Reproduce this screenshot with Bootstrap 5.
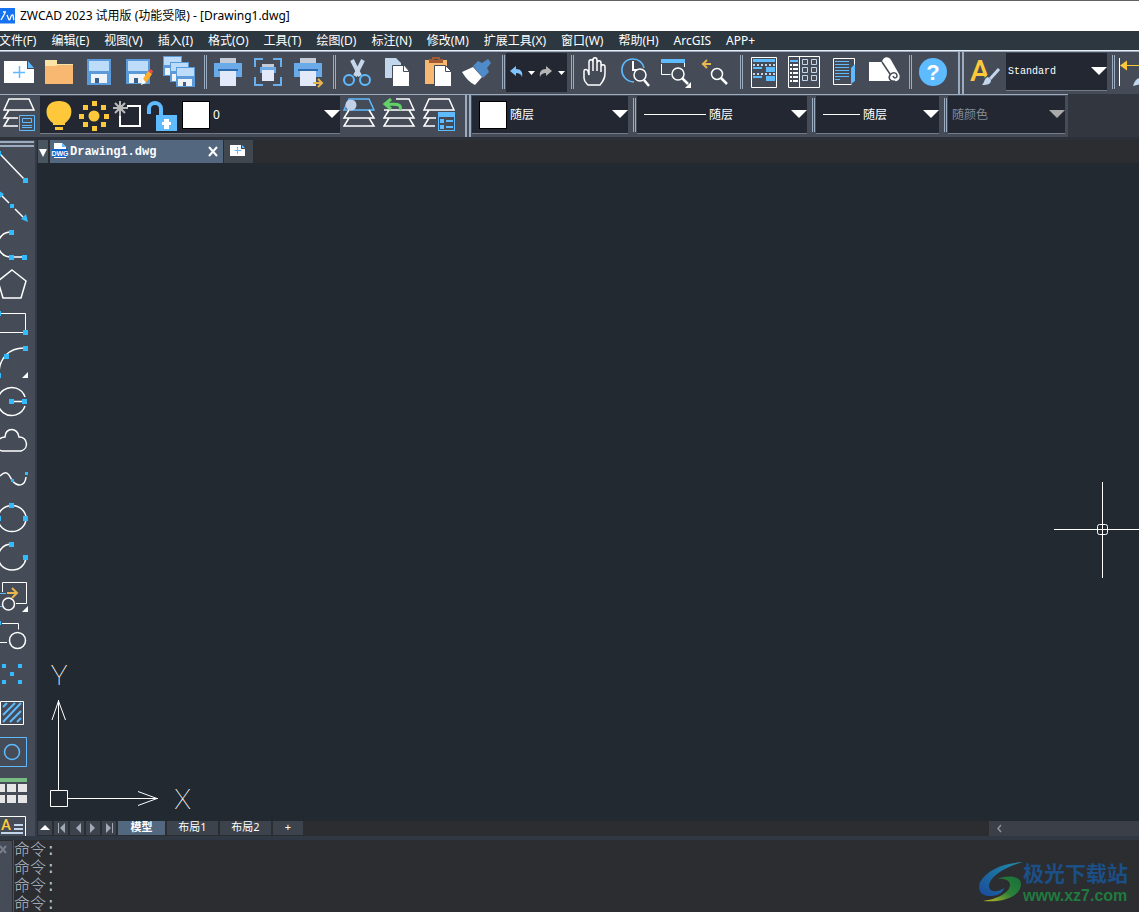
<!DOCTYPE html>
<html lang="zh-CN">
<head>
<meta charset="utf-8">
<meta name="viewport" content="width=device-width, initial-scale=1">
<title>ZWCAD 2023</title>
<link rel="stylesheet" href="https://cdn.jsdelivr.net/npm/bootstrap@5.3.0/dist/css/bootstrap.min.css">
<style>
:root{--tool:#454c58;--dark:#222732;--edge:#9babc0}
body{font-family:"Noto Sans","Noto Sans CJK SC",sans-serif;font-size:12px;line-height:16px;background:#31363f;color:#fff}
button{border:0;background:none;padding:0;color:inherit}
svg{display:block}
.titlebar{height:31px;border-top:1px solid #636363;background:#fff;color:#000}
.menubar{height:20px;background:#2d373f;border-bottom:1px solid #e6ecf2;gap:15px}
.menubar a{color:#fff;text-decoration:none;white-space:nowrap}
.strip{height:43px;background:var(--tool);border-top:1px solid var(--edge)}
.strip2{height:43px}
.strip2 .strip{width:max-content;padding-right:3px}
.tool{width:40px;height:42px;flex:none}
.first{margin-left:-1px}
.thin-sep{width:9px;flex:none;padding:3px 0 5px 5px}
.thin-sep::before{content:"";display:block;width:3px;height:100%;border:solid var(--edge);border-width:0 1px}
.wide-sep{width:12px;flex:none;padding-left:5px}
.wide-sep::before{content:"";display:block;width:6px;height:100%;border:solid var(--edge);border-width:0 2px}
.undo{width:61px;height:39px;margin-top:1px;background:var(--dark);flex:none}
.undo + .thin-sep{width:8px;padding-left:4px}
.combo{position:relative;height:38px;margin:1px 0 0 1px;background:var(--dark);border-bottom:1px solid #747b86;flex:none}
.thin-sep + .combo,.wide-sep + .combo{margin-left:0}
.combo select{appearance:none;border:0;background:none;color:#fff;flex:1;min-width:0;padding:0 0 0 3px;font:inherit;height:100%;outline:0}
.combo::after{content:"";position:absolute;right:0;top:14px;width:16px;height:8px;background:#fff;clip-path:polygon(0 0,100% 0,50% 100%);pointer-events:none}
.combo.off::after{background:#aaa}
.combo.off select{color:#858a94;opacity:1}
.layer{width:300px;padding-left:2px}.layer .tool{width:34px;height:38px}
.colour{width:156px}.ltype{width:170px}.lweight{width:123px}.pcolour{width:117px}.tstyle{width:101px}
.colour,.ltype,.lweight{padding-left:7px}
.tstyle select{font:10px "Liberation Mono",monospace;padding-left:2px}
.swatch{width:28px;height:28px;background:#fff;border:1px solid #000;flex:none}
.rule{height:1px;width:62px;background:#fff;flex:none}
.lweight .rule{width:37px}
.gap-row{height:3px;background:#2c3038}
.palette{width:37px;background:var(--tool);border-right:2px solid #323b47;flex:none}
.grip{height:8px;flex:none;padding:1px 1px 0 0}
.grip::before{content:"";display:block;height:6px;border:solid var(--edge);border-width:2px 0}
.palette button{width:35px;height:39px;flex:none;display:block}
.doctabs{height:23px;background:#2b2d31;gap:2px;padding-left:1px;flex:none}
.doctab{width:173px;background:#53677f;font:bold 12px "Liberation Mono",monospace}
.plus{width:29px;margin-left:-1px;background:#40474f}
.drop{width:10px;background:#4a565f}
.canvas{background:#222930;min-height:0}
.ucs{left:13px;bottom:0}
.cross{right:0;top:319px}
.sheets{height:15px;background:#2b2d31;gap:2px;padding-left:1px;flex:none}
.sheets button{background:#3d434c;height:14px;line-height:12px;font-size:11px;display:flex;justify-content:center;align-items:flex-start}
.sheets .nav-b{width:14px}.sheets .tab-b{width:51px}.sheets .add-b{width:30px}
.sheets .tab-b.on{width:47px;background:#53677f;font-weight:bold}
.scroll{width:150px;background:#3b4048}
.split{height:4px;background:#303844}
.cmd{background:#2b2d31;color:#b9bfca;height:72px}
.cmdbar{width:12px;background:var(--tool);margin-top:1px}
.cmdtext{border-left:1px solid #50555c;margin-left:1px;padding-top:2px;font:300 16px/18px "Liberation Mono","Noto Sans CJK SC",sans-serif}
.brand{right:11px;top:20px}
.brand-cn{font:bold 21px/24px "Noto Sans CJK SC",sans-serif;color:#1b4f86}
.brand-url{font:bold 16px/24px "Liberation Sans",sans-serif;color:#217a3e}
.w{fill:none;stroke:#fff;stroke-width:1.5}
.b{fill:none;stroke:#5ebbff;stroke-width:1.5}
.s1{stroke-width:1}.s2{stroke-width:2}.s3{stroke-width:2.5}
.d{fill:#33bbff}
</style>
</head>
<body class="vh-100 overflow-hidden d-flex flex-column">
<header class="flex-shrink-0">
  <div class="titlebar d-flex align-items-center">
    <svg width="16" height="16" viewBox="0 0 16 16" class="me-1"><path fill="#1672ee" d="M0 0h15v15.500H0z"/><path d="M1 12l4-7M3 4h3M3 8h1M9 12l-2-5M9 12c2 0 1-4 3-5s1 4 2 5" fill="none" stroke="#fff" stroke-width="1.300"/></svg>
    <span>ZWCAD 2023 试用版 (功能受限) - [Drawing1.dwg]</span>
  </div>
  <nav class="menubar d-flex align-items-center overflow-hidden" aria-label="菜单">
    <a href="#" class="first">文件(F)</a><a href="#">编辑(E)</a><a href="#">视图(V)</a><a href="#">插入(I)</a><a href="#">格式(O)</a><a href="#">工具(T)</a><a href="#">绘图(D)</a><a href="#">标注(N)</a><a href="#">修改(M)</a><a href="#">扩展工具(X)</a><a href="#">窗口(W)</a><a href="#">帮助(H)</a><a href="#">ArcGIS</a><a href="#">APP+</a>
  </nav>
  <div class="strip d-flex overflow-hidden" role="toolbar" aria-label="标准">
    <button class="tool first" aria-label="新建"><svg width="40" height="42" viewBox="-1 52 40 42"><path fill="#fff" d="M4 61h23v8h7v14H4z"/><path fill="#5ebbff" d="M28 61l6 7h-6z"/><path class="b" d="M13 72.500h12M19.500 66v12"/></svg></button>
    <button class="tool" aria-label="打开"><svg width="40" height="42" viewBox="39 52 40 42"><path fill="#fae3a4" d="M45 60h12v4h16v4H45z"/><path fill="#f9b872" d="M45 66h11l2-1h15v19H45z"/></svg></button>
    <button class="tool" aria-label="保存"><svg width="40" height="42" viewBox="79 52 40 42"><path fill="#5b9bda" d="M87 59h24v26H87z"/><path fill="#bddcfa" d="M89 61h20v10H89z"/><path fill="#eef3f8" d="M91 74h16v9H91z"/><path fill="#3f5e85" d="M95 78h4v5h-4z"/></svg></button>
    <button class="tool" aria-label="另存为"><svg width="40" height="42" viewBox="119 52 40 42"><path fill="#5b9bda" d="M126 59h24v25h-24z"/><path fill="#bddcfa" d="M128 61h20v10h-20z"/><path fill="#eef3f8" d="M129 74h16v9h-16z"/><path fill="#3f5e85" d="M134 78h4v5h-4z"/><path fill="#ffad2b" d="M143 79l5-8 4 3-6 9z"/><path fill="#e7534b" d="M148 71l2-2 3 2-1 3z"/><path fill="#fff" d="M143 79l3 4-5 2z"/></svg></button>
    <button class="tool" aria-label="全部保存"><svg width="40" height="42" viewBox="159 52 40 42"><g id="disk"><path fill="#5b9bda" d="M163 56h19v20h-19z"/><path fill="#bddcfa" d="M164 57h17v8h-17z"/><path fill="#eef3f8" d="M165 68h14v7h-14z"/><path fill="#3f5e85" d="M170 71h3v4h-3z"/></g><use href="#disk" x="7" y="6"/><use href="#disk" x="13" y="11"/></svg></button>
    <span class="thin-sep"></span>
    <button class="tool" aria-label="打印"><svg width="40" height="42" viewBox="208 52 40 42"><path fill="#c3cbd8" d="M220 58h16v5h-16z"/><path fill="#6aaae8" d="M214 63h28v14h-28z"/><path fill="#2c6cae" d="M218 69h20v2h-20z"/><path fill="#e2e9f8" d="M220 71h16v15h-16z"/></svg></button>
    <button class="tool" aria-label="打印预览"><svg width="40" height="42" viewBox="248 52 40 42"><path fill="none" stroke="#6bb0ee" stroke-width="2" d="M263 59h-8v8M273 59h8v8M255 77v8h8M281 77v8h-8"/><path fill="#c3cbd8" d="M262 64h12v3h-12z"/><path fill="#6aaae8" d="M260 67h16v6h-16z"/><path fill="#e2e9f8" d="M262 70h12v11h-12z"/></svg></button>
    <button class="tool" aria-label="发布"><svg width="40" height="42" viewBox="288 52 40 42"><path fill="#c3cbd8" d="M300 58h16v5h-16z"/><path fill="#6aaae8" d="M294 63h28v14h-28z"/><path fill="#2c6cae" d="M298 69h20v2h-20z"/><path fill="#e2e9f8" d="M300 71h16v15h-16z"/><path fill="none" stroke="#e8b44c" stroke-width="2" d="M313 83h9M318 79l4 4-4 4"/></svg></button>
    <span class="thin-sep"></span>
    <button class="tool" aria-label="剪切"><svg width="40" height="42" viewBox="337 52 40 42"><path fill="none" stroke="#c6d7ec" stroke-width="4" d="M352 60l8 16M363 60l-8 16"/><circle class="b s2" cx="349" cy="80" r="5"/><circle class="b s2" cx="365" cy="80" r="5"/></svg></button>
    <button class="tool" aria-label="复制"><svg width="40" height="42" viewBox="377 52 40 42"><path fill="#c2d6ec" d="M385 58h11l5 5v15h-16z"/><path fill="#fff" stroke="#454c58" d="M392.500 65.500h12l5 6v15h-17z"/><path fill="none" stroke="#454c58" d="M403.500 66v5.500h6"/></svg></button>
    <button class="tool" aria-label="粘贴"><svg width="40" height="42" viewBox="417 52 40 42"><path fill="#f9b872" d="M425 60h22v24h-22z"/><path fill="#a55c34" d="M429 59h3v-2h8v2h3v4h-14z"/><path fill="#454c58" d="M434 59h4v1h-4z"/><path fill="#fff" stroke="#454c58" d="M434.500 65.500h11l6 6v15h-17z"/><path fill="none" stroke="#454c58" d="M445.500 66v5.500h6"/></svg></button>
    <button class="tool" aria-label="格式刷"><svg width="40" height="42" viewBox="457 52 40 42"><path fill="#fff" d="M462 72l11-5 9 10-7 8q-7-3-13-13z"/><path fill="#508bc9" d="M473 66l5-5 4 2 6-4 3 4-4 5 2 4-6 6z"/></svg></button>
    <span class="thin-sep"></span>
    <div class="undo d-flex">
      <button aria-label="放弃"><svg width="30" height="39" viewBox="506 53 30 39"><path fill="#7fc3ff" d="M510 71l6-5v3c5 0 7 3 6 8-1-3-3-4-6-4v3z"/><path fill="#fff" d="M528 71h7l-3.500 4z"/></svg></button>
      <button aria-label="重做"><svg width="30" height="39" viewBox="536 53 30 39"><path fill="#b4b4b4" d="M552 71l-6-5v3c-5 0-7 3-6 8 1-3 3-4 6-4v3z"/><path fill="#fff" d="M558 71h7l-3.500 4z"/></svg></button>
    </div>
    <span class="thin-sep"></span>
    <button class="tool" aria-label="平移"><svg width="40" height="42" viewBox="575 52 40 42"><path class="w" d="M588 85h12c3-4 5-6 5-12v-6c0-3-4-3-4 0v5-9c0-3-4-3-4 0v8-11c0-3-4-3-4 0v11-9c0-3-4-3-4 0v13l-1-4c-1-2-4-2-4 0v7c0 4 2 5 4 7z"/></svg></button>
    <button class="tool" aria-label="实时缩放"><svg width="40" height="42" viewBox="615 52 40 42"><path class="b" d="M634 82c-16-1-16-23-1-23 6 0 10 4 11 9"/><path class="w s2" d="M633 61v9h4"/><circle class="w" cx="640" cy="75" r="6"/><path class="w s3" d="M644 80l5 6"/></svg></button>
    <button class="tool" aria-label="窗口缩放"><svg width="40" height="42" viewBox="655 52 40 42"><path fill="#5ebbff" d="M661 59h24v4h-24z"/><path class="w s1" d="M661.500 64v10.500h9M684.500 63v4"/><circle class="w" cx="678" cy="74" r="6"/><path class="w s3" d="M682 78l6 6"/><path fill="#fff" d="M691 82v6h-6z"/></svg></button>
    <button class="tool" aria-label="上一视图"><svg width="40" height="42" viewBox="695 52 40 42"><path fill="none" stroke="#e8b44c" stroke-width="2" d="M702 64h9M707 60l-4 4 4 4"/><circle class="w" cx="717" cy="74" r="5.500"/><path class="w s3" d="M721 78l6 6"/></svg></button>
    <span class="thin-sep"></span>
    <button class="tool" aria-label="特性"><svg width="40" height="42" viewBox="744 52 40 42"><path class="w s1" d="M751.500 57.500h25v30h-25z"/><path fill="#5ebbff" d="M753 59h22v3h-22zM753 67h9v2h-9zM766 67h9v5h-9zM753 76h9v2h-9zM766 76h9v5h-9z"/><path stroke="#c2d6ec" stroke-width="2" stroke-dasharray="2" d="M753 65h22M753 74h22"/></svg></button>
    <button class="tool" aria-label="设计中心"><svg width="40" height="42" viewBox="784 52 40 42"><path class="w s1" d="M788.500 56.500h31v31h-31zM799.500 57v30"/><path stroke="#fff" stroke-width="2" d="M790 65h2m1 0h5M790 69h2m1 0h5M790 73h2m1 0h5M790 77h2m1 0h5M790 81h2m1 0h5"/><path stroke="#5ebbff" stroke-width="2" d="M790 61h8"/><path fill="none" stroke="#c2d6ec" d="M802.500 59.500h5v5h-5zM811.500 59.500h5v5h-5zM802.500 67.500h5v5h-5zM811.500 67.500h5v5h-5zM802.500 75.500h5v5h-5zM811.500 75.500h5v5h-5z"/></svg></button>
    <button class="tool" aria-label="工具选项板"><svg width="40" height="42" viewBox="824 52 40 42"><path class="w s1" d="M854.500 65v-6.500h-21v26h18"/><path stroke="#5ebbff" d="M835 61.500h14M835 64.500h14M835 67.500h14M835 70.500h14M835 73.500h14M835 76.500h14M835 79.500h5"/><path fill="#5ebbff" d="M851 68l4-4v17l-4 3z"/></svg></button>
    <button class="tool" aria-label="清理"><svg width="40" height="42" viewBox="864 52 40 42"><path fill="#fff" d="M869 62h13c1-6 7-6 9-2l8 14c2 4-1 8-4 7H869z"/><path fill="none" stroke="#454c58" stroke-width="1.500" d="M882 62l8 12M895 81c-5 1-7-3-5-6 3-4 7-2 7 1 0 2-3 3-4 0"/></svg></button>
    <span class="thin-sep"></span>
    <button class="tool" aria-label="帮助"><svg width="40" height="42" viewBox="913 52 40 42"><circle cx="933" cy="72" r="14" fill="#5ebbff"/><text x="933" y="80" text-anchor="middle" font-family="Liberation Sans,sans-serif" font-weight="700" font-size="22" fill="#fff">?</text></svg></button>
    <span class="wide-sep"></span>
    <button class="tool" aria-label="文字样式"><svg width="40" height="42" viewBox="965 52 40 42"><text x="970" y="81" font-family="Roboto,sans-serif" font-weight="500" font-size="30" fill="#ffc83a">A</text><path stroke="#454c58" stroke-width="5" d="M999 67l-14 14"/><path stroke="#c2d6ec" stroke-width="3" d="M999 69l-9 10"/><path fill="#c2d6ec" d="M988 77l3 3c0 4-3 5-9 5 3-3 2-7 6-8z"/></svg></button>
    <div class="combo tstyle d-flex"><select aria-label="文字样式名"><option>Standard</option></select></div>
    <span class="thin-sep"></span>
    <button class="tool" aria-label="标注样式"><svg width="40" height="42" viewBox="1115 52 40 42"><path stroke="#fff" d="M1118.500 58v28"/><path stroke="#ffc83a" d="M1120 65.500h34"/><path fill="#ffc83a" d="M1119 65.500l7-5v10z"/><path fill="#c2d6ec" d="M1132 86c2-6 4-8 8-8v6z"/></svg></button>
  </div>
  <div class="strip2"><div class="strip d-flex" role="toolbar" aria-label="图层与特性">
    <button class="tool first" aria-label="图层特性"><svg width="40" height="42" viewBox="-1 95 40 42"><path class="w" d="M9 99h20l5 11H4zM9 110l-5 8h14M9 118l-5 8h14"/><path fill="#454c58" d="M18 114h18v18H18z"/><path class="b s1" d="M19.500 115.500h15v15h-15zM22.500 118.500h9v4h-9zM22 125.500h10M22 127.500h10"/></svg></button>
    <div class="combo layer d-flex align-items-center">
      <button class="tool" aria-label="图层开关"><svg width="34" height="38" viewBox="42 96 34 38"><path fill="#ffc83a" d="M59 101c16 0 15 17 6 22v2H53v-2c-9-5-10-22 6-22zM55 127h8v3h-8z"/></svg></button>
      <button class="tool" aria-label="冻结"><svg width="34" height="38" viewBox="76 96 34 38"><circle cx="94" cy="116" r="5.500" fill="#ffc83a"/><path fill="#ffc83a" d="M92 101h5v5h-5zM92 126h5v5h-5zM79 114h5v5h-5zM104 114h5v5h-5zM83 105h5v5h-5zM101 105h5v5h-5zM83 122h5v5h-5zM101 122h5v5h-5z"/></svg></button>
      <button class="tool" aria-label="视口冻结"><svg width="34" height="38" viewBox="110 96 34 38"><path class="w s2" d="M127 106h13v20h-20v-12"/><path stroke="#b9b9b9" stroke-width="2" d="M120 101v15M113 108h15M115 103l10 10M125 103l-10 10"/><circle cx="120" cy="108" r="3" fill="#b9b9b9"/></svg></button>
      <button class="tool" aria-label="锁定"><svg width="34" height="38" viewBox="144 96 34 38"><path fill="none" stroke="#5ebbff" stroke-width="4" d="M149 114v-5c0-8 12-8 12 0v7"/><path fill="#5ebbff" d="M156 115h21v16h-21z"/><path fill="#fff" d="M164 119h5v3h2v3h-2v4h-5v-4h-2v-3h2z"/></svg></button>
      <span class="swatch ms-1"></span>
      <select aria-label="当前图层"><option>0</option></select>
    </div>
    <button class="tool" aria-label="图层置为当前"><svg width="40" height="42" viewBox="340 95 40 42"><path class="b" d="M349 99h20l5 11h-30z"/><path class="w" d="M349 110l-5 8h30l-5-8M349 118l-5 8h30l-5-8"/><circle cx="351" cy="105" r="5.500" fill="#c2d0e8"/></svg></button>
    <button class="tool" aria-label="上一图层"><svg width="40" height="42" viewBox="380 95 40 42"><path class="w" d="M396 99h13l5 11h-30M389 110l-5 8h30l-5-8M389 118l-5 8h30l-5-8"/><path fill="none" stroke="#62d268" stroke-width="3" d="M400 110c2-6-3-6-13-6M391 99l-6 5 6 5"/></svg></button>
    <button class="tool" aria-label="图层状态"><svg width="40" height="42" viewBox="420 95 40 42"><path class="w" d="M429 99h20l5 11h-30zM429 110l-5 8h12M429 118l-5 8h11"/><path fill="#5ebbff" d="M438 112h17v19h-17z"/><path fill="#454c58" d="M439 117h15v13h-15z"/><path fill="#5ebbff" d="M440 119h4v4h-4zM440 125h4v4h-4zM446 120h7v2h-7zM446 126h7v2h-7z"/></svg></button>
    <span class="wide-sep"></span>
    <div class="combo colour d-flex align-items-center"><span class="swatch"></span><select aria-label="颜色"><option>随层</option></select></div>
    <span class="thin-sep"></span>
    <div class="combo ltype d-flex align-items-center"><span class="rule"></span><select aria-label="线型"><option>随层</option></select></div>
    <span class="thin-sep"></span>
    <div class="combo lweight d-flex align-items-center"><span class="rule"></span><select aria-label="线宽"><option>随层</option></select></div>
    <span class="thin-sep"></span>
    <div class="combo off pcolour d-flex"><select class="ps-1" aria-label="打印颜色" disabled><option>随颜色</option></select></div>
  </div></div>
  <div class="gap-row"></div>
</header>
<main class="flex-grow-1 d-flex overflow-hidden">
  <aside class="palette h-100 d-flex flex-column overflow-hidden" role="toolbar" aria-label="绘图">
    <div class="grip"></div>
    <button aria-label="直线"><svg width="35" height="39" viewBox="0 148 35 39"><path class="w" d="M0 154l25 26"/><path class="d" d="M-3 151h4v5h-4zM23 178h5v5h-5z"/></svg></button>
    <button aria-label="构造线"><svg width="35" height="39" viewBox="0 187 35 39"><path class="w" d="M0 194l9 9M15 209l8 8"/><path class="d" d="M10 204h4v4h-4zM28 222l-7-3 5-5zM-1 191l5 3-4 4z"/></svg></button>
    <button aria-label="多段线"><svg width="35" height="39" viewBox="0 226 35 39"><path class="w" d="M11 232c-17 0-17 25 0 25h14"/><path class="d" d="M9 230h5v5H9zM9 255h5v5H9zM22 255h5v5h-5z"/></svg></button>
    <button aria-label="正多边形"><svg width="35" height="39" viewBox="0 265 35 39"><path class="w" d="M12 270l14 11-5 17H3l-5-17z"/></svg></button>
    <button aria-label="矩形"><svg width="35" height="39" viewBox="0 304 35 39"><path class="w s1" d="M0 313.500h25.500v19H0"/><path class="d" d="M-3 311h4v5h-4zM23 330h5v5h-5z"/></svg></button>
    <button aria-label="圆弧"><svg width="35" height="39" viewBox="0 343 35 39"><path class="w" d="M-1 374c0-16 10-26 25-26"/><path class="d" d="M-3 373h4v5h-4zM4 354h5v5H4zM23 346h5v5h-5z"/><path fill="#fff" d="M28 372v6h-6z"/></svg></button>
    <button aria-label="圆"><svg width="35" height="39" viewBox="0 382 35 39"><path class="w" d="M25 397a14 14 0 1 0 0 9M12 401.500h12"/><path class="d" d="M9 399h5v5H9zM22 399h5v5h-5z"/></svg></button>
    <button aria-label="修订云线"><svg width="35" height="39" viewBox="0 421 35 39"><path class="w" d="M2 451c-8-2-7-13 3-14 0-10 13-10 14 0 9 0 10 12 2 14z"/></svg></button>
    <button aria-label="样条曲线"><svg width="35" height="39" viewBox="0 460 35 39"><path class="w" d="M0 476c7-7 9-1 12 4 5 7 13 7 14-3"/><path class="d" d="M25 472h3v3h-3zM11 479h3v3h-3z"/></svg></button>
    <button aria-label="椭圆"><svg width="35" height="39" viewBox="0 499 35 39"><ellipse class="w" cx="12" cy="518.500" rx="14" ry="13"/><path class="d" d="M9 503h5v5H9zM23 516h5v5h-5zM-3 516h4v5h-4z"/></svg></button>
    <button aria-label="椭圆弧"><svg width="35" height="39" viewBox="0 538 35 39"><path class="w" d="M11 544c-17 1-17 26 1 26 8 0 13-5 14-12"/><path class="d" d="M9 542h5v5H9zM23 555h5v5h-5z"/></svg></button>
    <button aria-label="插入块"><svg width="35" height="39" viewBox="0 577 35 39"><path class="w s1" d="M2.500 592v-9.500h24v21H16"/><circle class="w" cx="8.500" cy="604" r="6"/><path class="b s1" d="M0 593.500h6M0 606.500h2"/><path stroke="#e8b44c" stroke-width="2" fill="none" d="M7 593h10M12 588l5 5-5 5"/><path fill="#fff" d="M28 606v6h-6z"/></svg></button>
    <button aria-label="创建块"><svg width="35" height="39" viewBox="0 616 35 39"><path class="w s1" d="M2 623.500h16.500v6M0 642.500h7"/><circle class="w" cx="17.500" cy="640.500" r="8"/><path class="d" d="M-2 621h3v4h-3z"/></svg></button>
    <button aria-label="点"><svg width="35" height="39" viewBox="0 655 35 39"><path class="d" d="M2 664h4v4H2zM18 664h4v4h-4zM10 672h4v4h-4zM2 680h4v4H2zM18 680h4v4h-4z"/></svg></button>
    <button aria-label="图案填充"><svg width="35" height="39" viewBox="0 694 35 39"><path class="w s1" d="M.5 701.500h23v23H.5z"/><path class="b s2" d="M3 707l4-4M3 715l12-12M3 722l18-19M10 722l11-11M17 722l4-4"/></svg></button>
    <button aria-label="面域"><svg width="35" height="39" viewBox="0 733 35 39"><path class="b s1" d="M-1 737.500h27.500v29H-1"/><circle class="b" cx="12" cy="752" r="7.500"/></svg></button>
    <button aria-label="表格"><svg width="35" height="39" viewBox="0 772 35 39"><path fill="#79bd84" d="M0 778h27v4H0z"/><path fill="#e6e6e6" d="M0 784h5v8H0zM7 784h9v8H7zM18 784h9v8h-9zM0 795h5v8H0zM7 795h9v8H7zM18 795h9v8h-9z"/></svg></button>
    <button aria-label="多行文字"><svg width="35" height="39" viewBox="0 811 35 39"><path class="w s1" d="M-1 816.500h26.500v30H-1"/><text x="1" y="830" font-family="Roboto,sans-serif" font-weight="500" font-size="15" fill="#ffc83a">A</text><path stroke="#c2d6ec" stroke-width="2" d="M14 825h9M14 829h9M1 833h22"/></svg></button>
  </aside>
  <section class="flex-grow-1 d-flex flex-column overflow-hidden">
    <div class="doctabs d-flex">
      <button class="drop" aria-label="文档列表"><svg width="10" height="23"><path fill="#fff" d="M1 9h8l-4 8z"/></svg></button>
      <div class="doctab d-flex align-items-center">
        <svg width="20" height="23" viewBox="50 140 20 23"><path fill="#fff" d="M54 143h8l4 4v11H54z"/><path fill="#5ebbff" d="M62 143l4 4h-4z"/><path fill="#1163d0" d="M52 149h16v8H52z"/><text x="60" y="155.500" text-anchor="middle" font-family="Liberation Sans,sans-serif" font-weight="700" font-size="7" fill="#fff">DWG</text></svg>
        <span>Drawing1.dwg</span>
        <button class="ms-auto me-1" aria-label="关闭"><svg width="11" height="11"><path stroke="#fff" stroke-width="2" d="M1 1l8 9M9 1l-8 9"/></svg></button>
      </div>
      <button class="plus" aria-label="新图形"><svg width="29" height="23" viewBox="224 140 29 23"><path fill="#fff" d="M230 145h11l4 4v7h-15z"/><path fill="#40474f" d="M241 145h4v4h-4z"/><path fill="#5ebbff" d="M242 145l3 3h-3z"/><path stroke="#5ebbff" d="M234.500 150.500h7M237.500 147v7"/></svg></button>
    </div>
    <div class="canvas flex-grow-1 position-relative overflow-hidden">
      <svg class="ucs position-absolute" width="160" height="161" viewBox="50 660 160 161" fill="none" stroke="#fff"><path d="M50.500 790.500h17v16h-17zM58.500 790v-90M52 720l6.500-19 7 19M68 798.500h90M138 791.500l19 7-19 7"/><g fill="#fff" stroke="none" font-family="Roboto,Lato,sans-serif" font-weight="100" font-size="28"><text x="59" y="685" text-anchor="middle">Y</text><text x="182.500" y="809" text-anchor="middle">X</text></g></svg>
      <svg class="cross position-absolute" width="85" height="96" viewBox="1054 482 85 96" fill="none" stroke="#fff"><path d="M1054 529.500h85M1102.500 482v96"/><rect x="1097.500" y="524.500" width="10" height="10" rx="2"/></svg>
    </div>
    <div class="sheets d-flex">
      <button class="nav-b" aria-label="展开"><svg width="14" height="14"><path fill="#fff" d="M2 9h10L7 4z"/></svg></button>
      <button class="nav-b" aria-label="第一个"><svg width="14" height="14" fill="#a3aab5"><path d="M4 2h1v10H4zM11 2v10L6 7z"/></svg></button>
      <button class="nav-b" aria-label="上一个"><svg width="14" height="14" fill="#a3aab5"><path d="M11 2v10L6 7z"/></svg></button>
      <button class="nav-b" aria-label="下一个"><svg width="14" height="14" fill="#a3aab5"><path d="M4 2v10l5-5z"/></svg></button>
      <button class="nav-b" aria-label="最后一个"><svg width="14" height="14" fill="#a3aab5"><path d="M4 2v10l5-5zM10 2h1v10h-1z"/></svg></button>
      <button class="tab-b on">模型</button><button class="tab-b">布局1</button><button class="tab-b">布局2</button><button class="add-b">+</button>
      <div class="scroll ms-auto"><svg width="20" height="15"><path d="M12 4L9 7.500 12 11" fill="none" stroke="#8a92a0" stroke-width="1.500"/></svg></div>
    </div>
  </section>
</main>
<div class="split flex-shrink-0"></div>
<footer class="cmd flex-shrink-0 d-flex position-relative overflow-hidden">
  <div class="cmdbar"><svg width="12" height="16"><path stroke="#777e89" stroke-width="2" d="M0 5l6 7M6 5l-6 7"/></svg></div>
  <div class="cmdtext"><div>命令:</div><div>命令:</div><div>命令:</div><div>命令:</div></div>
  <div class="brand position-absolute d-flex">
    <svg width="45" height="44" viewBox="978 860 45 44"><defs><linearGradient id="bl" x1="0" y1="1" x2="1" y2="0"><stop stop-color="#1a4a9a"/><stop offset="1" stop-color="#2090a8"/></linearGradient><linearGradient id="gr" x1="0" y1="1" x2="1" y2="0"><stop stop-color="#c5bc22"/><stop offset=".5" stop-color="#2c8038"/><stop offset="1" stop-color="#186f3a"/></linearGradient></defs><path fill="url(#bl)" d="M1023 862c-20 1-36 8-43 20-3 9 2 15 12 14 8-1 11-4 12-8-5 4-14 5-15-1 0-11 17-20 34-25z"/><path fill="url(#gr)" d="M997 879c9-4 24-4 24 5 0 12-17 19-38 17 15-2 27-9 27-16 0-5-6-7-13-6z"/></svg>
    <div><div class="brand-cn">极光下载站</div><div class="brand-url">www.xz7.com</div></div>
  </div>
</footer>
<script src="https://cdn.jsdelivr.net/npm/bootstrap@5.3.0/dist/js/bootstrap.bundle.min.js"></script>
</body>
</html>
